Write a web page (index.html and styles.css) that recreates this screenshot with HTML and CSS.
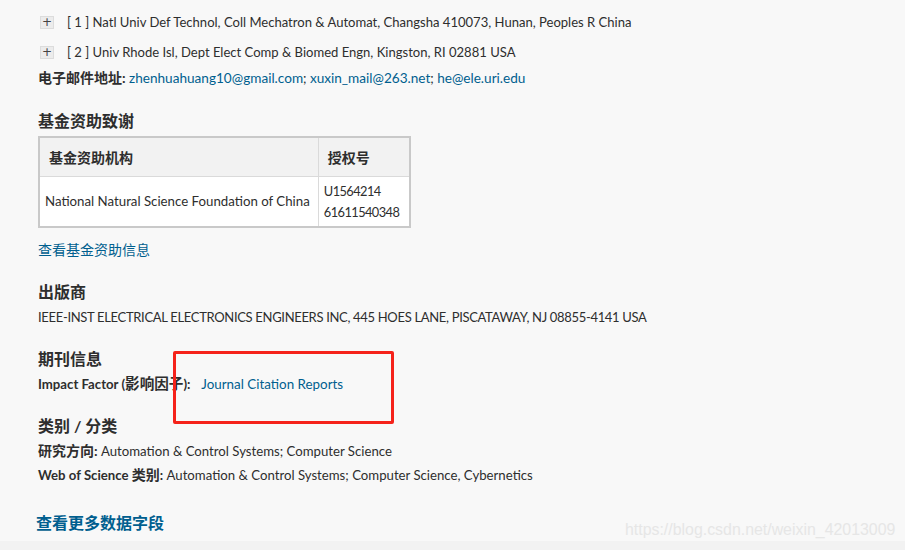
FILE: index.html
```html
<!DOCTYPE html>
<html lang="zh">
<head>
<meta charset="utf-8">
<title>Record</title>
<link rel="stylesheet" href="styles.css">
</head>
<body>
<div class="page">
  <div class="content">
    <div class="affil"><span class="plus">+</span><span class="affil-text">[ 1 ] Natl Univ Def Technol, Coll Mechatron &amp; Automat, Changsha 410073, Hunan, Peoples R China</span></div>
    <div class="affil"><span class="plus">+</span><span class="affil-text">[ 2 ] Univ Rhode Isl, Dept Elect Comp &amp; Biomed Engn, Kingston, RI 02881 USA</span></div>
    <div class="line email"><b class="label zh">电子邮件地址:</b> <a class="link">zhenhuahuang10@gmail.com</a>; <a class="link">xuxin_mail@263.net</a>; <a class="link">he@ele.uri.edu</a></div>

    <h2 class="section-title first">基金资助致谢</h2>
    <table class="fund">
      <tr class="head"><th class="c1">基金资助机构</th><th class="c2">授权号</th></tr>
      <tr class="body"><td class="c1">National Natural Science Foundation of China</td><td class="c2">U1564214<br>61611540348</td></tr>
    </table>
    <div class="line more"><a class="link zh">查看基金资助信息</a></div>

    <h2 class="section-title">出版商</h2>
    <div class="line caps">IEEE-INST ELECTRICAL ELECTRONICS ENGINEERS INC, 445 HOES LANE, PISCATAWAY, NJ 08855-4141 USA</div>

    <h2 class="section-title">期刊信息</h2>
    <div class="line impact"><b class="label">Impact Factor (<span class="zh">影响因子</span>):</b>&nbsp; <a class="link">Journal Citation Reports</a></div>

    <h2 class="section-title">类别 / 分类</h2>
    <div class="line"><b class="label zh">研究方向:</b> Automation &amp; Control Systems; Computer Science</div>
    <div class="line"><b class="label">Web of Science <span class="zh">类别</span>:</b> Automation &amp; Control Systems; Computer Science, Cybernetics</div>

    <div class="all-fields"><a class="link">查看更多数据字段</a></div>
  </div>
  <div class="footer-band"></div>
  <div class="highlight"></div>
  <div class="watermark">https://blog.csdn.net/weixin_42013009</div>
</div>
</body>
</html>
```
FILE: styles.css
```css
html, body {
  margin: 0;
  padding: 0;
  background: #f8f8f8;
}
.page {
  position: relative;
  width: 905px;
  height: 550px;
  overflow: hidden;
  background: #f8f8f8;
  font-family: "Lato", "Noto Sans CJK SC", sans-serif;
  font-size: 13px;
  color: #2e2e2e;
}
.content {
  padding: 7px 0 0 38px;
}
.affil {
  height: 30px;
  display: flex;
  align-items: center;
}
.plus {
  box-sizing: border-box;
  width: 14px;
  height: 13px;
  margin-left: 2px;
  margin-right: 13px;
  background: #ececec;
  border: 1px solid #dcdcdc;
  color: #444;
  font-family: "DejaVu Sans", sans-serif;
  font-size: 12px;
  line-height: 10px;
  text-align: center;
}
.affil-text {
  font-size: 13.05px;
}
.line {
  height: 22px;
  line-height: 22px;
  margin-top: 2px;
  white-space: nowrap;
  font-size: 13.2px;
}
.affil + .line { margin-top: 0; }
.email .link {
  font-size: 13.6px;
}
.caps {
  font-size: 13px;
  letter-spacing: -0.32px;
}
.label {
  font-weight: bold;
  color: #2e2e2e;
}
.zh {
  font-size: 14px;
}
.impact .zh {
  font-size: 14.6px;
}
.impact .link {
  margin-left: 4px;
  font-size: 13.4px;
}
.link {
  color: #005f8f;
  text-decoration: none;
}
.section-title {
  margin: 19px 0 0 0;
  height: 24px;
  line-height: 24px;
  font-size: 16px;
  font-weight: bold;
  color: #2e2e2e;
}
.section-title.first {
  margin-top: 20px;
  margin-bottom: 3px;
}
.fund {
  border-collapse: collapse;
  border: 2px solid #c9c9c9;
  background: #fff;
}
.fund th, .fund td {
  border: 1px solid #dadada;
  text-align: left;
  padding: 0;
}
.fund .head th {
  height: 38px;
  background: #f2f2f2;
  font-weight: bold;
  font-size: 14px;
}
.fund .head .c1 { padding-left: 9px; }
.fund .head .c2 { padding-left: 9px; }
.fund .body td {
  height: 49px;
  line-height: 21px;
  font-size: 13.25px;
}
.fund .body .c1 { padding: 0 8px 0 5px; }
.fund .body .c2 {
  padding: 0 10px 0 5px;
  font-size: 12.8px;
  letter-spacing: -0.55px;
}
.more {
  margin-top: 11px;
}
.all-fields {
  margin: 24px 0 0 -2px;
  height: 26px;
  line-height: 26px;
  font-size: 16px;
  font-weight: bold;
}
.footer-band {
  position: absolute;
  left: 0;
  right: 0;
  bottom: 0;
  height: 9px;
  background: #f2f2f2;
}
.highlight {
  position: absolute;
  left: 173px;
  top: 351px;
  width: 221px;
  height: 73px;
  box-sizing: border-box;
  border: 3px solid #f5221a;
  border-radius: 2px;
}
.watermark {
  position: absolute;
  left: 625px;
  top: 521px;
  font-family: "Liberation Sans", Arial, sans-serif;
  font-size: 15.9px;
  color: #e6e6e6;
}
```
